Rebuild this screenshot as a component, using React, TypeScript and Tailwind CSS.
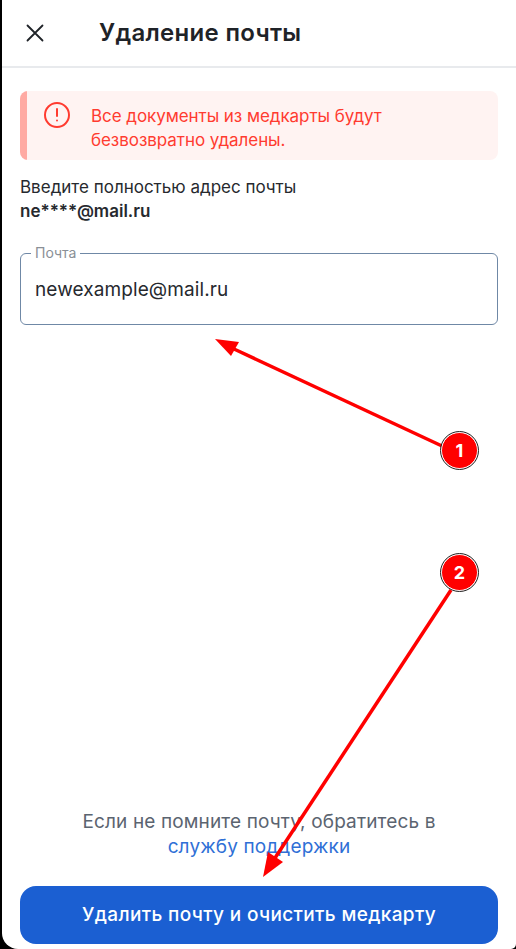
const App = () => {
  return (
    <div className="relative h-[949px] w-[516px] overflow-hidden bg-black font-['Inter',sans-serif]">
      <div className="ml-[2px] flex h-full flex-col rounded-bl-[16px] rounded-br-[5px] bg-white">
        <header className="flex h-[68px] shrink-0 items-center border-b-2 border-[#e8eaed] pl-[23px]">
          <svg width="20" height="20" viewBox="0 0 20 20" fill="none" stroke="#1f2328" strokeWidth="1.8" strokeLinecap="round">
            <path d="M2.5 2.5 L17.5 17.5 M17.5 2.5 L2.5 17.5" />
          </svg>
          <h1 className="ml-[54px] text-[24px] font-semibold tracking-[0.3px] text-[#1f2328]">Удаление почты</h1>
        </header>

        <main className="flex flex-1 flex-col pl-[18px] pr-[18px]">
          <div className="mt-[23px] flex h-[69px] overflow-hidden rounded-lg bg-[#fff3f2]">
            <div className="w-[7px] bg-[#ffaaa3]" />
            <div className="flex pl-[16px] pt-[10px]">
              <svg width="28" height="28" viewBox="0 0 28 28" fill="none" stroke="#ff3b30" strokeWidth="2" strokeLinecap="round">
                <circle cx="14" cy="14" r="12" />
                <path d="M14 8 V15" />
                <path d="M14 19.5 V19.6" />
              </svg>
              <p className="ml-[20px] pt-[3px] text-[17px] leading-[24px] tracking-[-0.06px] text-[#ff3b30]">
                Все документы из медкарты будут
                <br />
                безвозвратно удалены.
              </p>
            </div>
          </div>

          <p className="mt-[15px] text-[17px] leading-[24px] text-[#26292e]">Введите полностью адрес почты</p>
          <p className="text-[17px] font-semibold leading-[24px] text-[#26292e]">ne****@mail.ru</p>

          <fieldset className="mt-[23px] h-[79px] rounded-md border-[1.5px] border-[#6f88a6] px-[10px]">
            <legend className="px-[4px] text-[14px] leading-[14px] text-[#8a8f96]">Почта</legend>
            <div className="pl-[4px] pt-[18px] text-[19px] leading-[24px] tracking-[0.1px] text-[#26292e]">newexample@mail.ru</div>
          </fieldset>

          <div className="mt-auto text-center text-[19px] leading-[25px] tracking-[0.14px]">
            <p className="text-[#5b6470]">Если не помните почту, обратитесь в</p>
            <a href="#support" className="text-[#2f6fd6]">службу поддержки</a>
          </div>

          <button className="mb-[5px] mt-[27px] h-[58px] shrink-0 rounded-2xl bg-[#1b5fd2] text-[19px] font-medium tracking-[0.36px] text-white">
            Удалить почту и очистить медкарту
          </button>
        </main>
      </div>

      {/* annotation arrows and numbered badges over the page */}
      <svg className="absolute left-0 top-0" width="516" height="949" viewBox="0 0 516 949" fill="none">
        <path d="M442 446 L234 349" stroke="#ff0000" strokeWidth="3.5" />
        <path d="M215 339 L239 342 L231 356 Z" fill="#ff0000" />
        <path d="M451 590 L275 858" stroke="#ff0000" strokeWidth="3.5" />
        <path d="M263 877 L268 852 L283 862 Z" fill="#ff0000" />
      </svg>
      <Badge label="1" className="top-[432px]" />
      <Badge label="2" className="top-[554px]" />
    </div>
  );
};

const Badge = ({ label, className }: { label: string; className: string }) => (
  <div
    className={`absolute left-[441px] flex h-[37px] w-[37px] items-center justify-center rounded-full border border-white bg-[#ff0000] text-[18px] font-bold text-white outline outline-1 outline-[#222] ${className}`}
  >
    {label}
  </div>
);

export default App;
